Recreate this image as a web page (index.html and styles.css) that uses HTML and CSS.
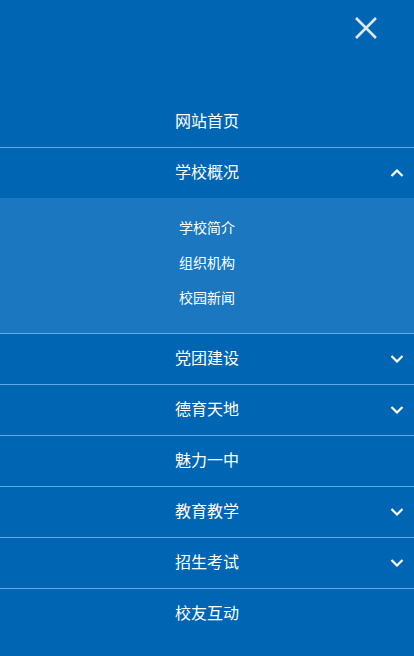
FILE: index.html
```html
<html>

<head>
    <meta charset="utf-8">
    <link rel="stylesheet" href="styles.css">
    <title>菜单</title>
</head>

<body>
    <div class="menu">
        <div class="menu-top">
            <a class="close" href="#">
                <svg width="24" height="24" viewBox="0 0 24 24">
                    <path d="M2 2 L22 22 M22 2 L2 22" stroke="currentColor" stroke-width="2.6" fill="none" />
                </svg>
            </a>
        </div>
        <ul class="nav">
            <li class="item"><a href="#">网站首页</a></li>
            <li class="item open">
                <a href="#">学校概况</a>
                <svg class="arrow" width="14" height="8" viewBox="0 0 14 8">
                    <path d="M1.5 7 L7 1.5 L12.5 7" stroke="currentColor" stroke-width="2.2" fill="none" />
                </svg>
                <ul class="sub">
                    <li><a href="#">学校简介</a></li>
                    <li><a href="#">组织机构</a></li>
                    <li><a href="#">校园新闻</a></li>
                </ul>
            </li>
            <li class="item">
                <a href="#">党团建设</a>
                <svg class="arrow" width="14" height="8" viewBox="0 0 14 8">
                    <path d="M1.5 1 L7 6.5 L12.5 1" stroke="currentColor" stroke-width="2.2" fill="none" />
                </svg>
            </li>
            <li class="item">
                <a href="#">德育天地</a>
                <svg class="arrow" width="14" height="8" viewBox="0 0 14 8">
                    <path d="M1.5 1 L7 6.5 L12.5 1" stroke="currentColor" stroke-width="2.2" fill="none" />
                </svg>
            </li>
            <li class="item"><a href="#">魅力一中</a></li>
            <li class="item">
                <a href="#">教育教学</a>
                <svg class="arrow" width="14" height="8" viewBox="0 0 14 8">
                    <path d="M1.5 1 L7 6.5 L12.5 1" stroke="currentColor" stroke-width="2.2" fill="none" />
                </svg>
            </li>
            <li class="item">
                <a href="#">招生考试</a>
                <svg class="arrow" width="14" height="8" viewBox="0 0 14 8">
                    <path d="M1.5 1 L7 6.5 L12.5 1" stroke="currentColor" stroke-width="2.2" fill="none" />
                </svg>
            </li>
            <li class="item last"><a href="#">校友互动</a></li>
        </ul>
    </div>
</body>

</html>
```

FILE: styles.css
```css
body {
    margin: 0;
    background-color: #0066b3;
    font-family: "Noto Sans CJK SC", sans-serif;
    color: #fff;
}

a {
    color: #fff;
    text-decoration: none;
}

.menu {
    width: 414px;
    height: 656px;
    overflow: hidden;
}

.menu-top {
    height: 97px;
    display: flex;
    justify-content: flex-end;
    align-items: flex-start;
}

.close {
    color: #dce9f6;
    margin: 16px 36px 0 0;
    display: flex;
}

.nav {
    list-style: none;
    margin: 0;
    padding: 0;
}

.item {
    position: relative;
    border-bottom: solid 1px #64aae8;
    text-align: center;
}

.item.last {
    border-bottom: none;
}

.item>a {
    display: block;
    height: 46px;
    line-height: 46px;
    padding-bottom: 4px;
    font-size: 16px;
}

.arrow {
    position: absolute;
    right: 10px;
    top: 21px;
    color: #fff;
}

.sub {
    list-style: none;
    margin: 0;
    padding: 13px 0 17px;
    background-color: #1b77bf;
}

.sub>li>a {
    display: block;
    height: 33px;
    line-height: 33px;
    padding-bottom: 2px;
    font-size: 14px;
}
```
